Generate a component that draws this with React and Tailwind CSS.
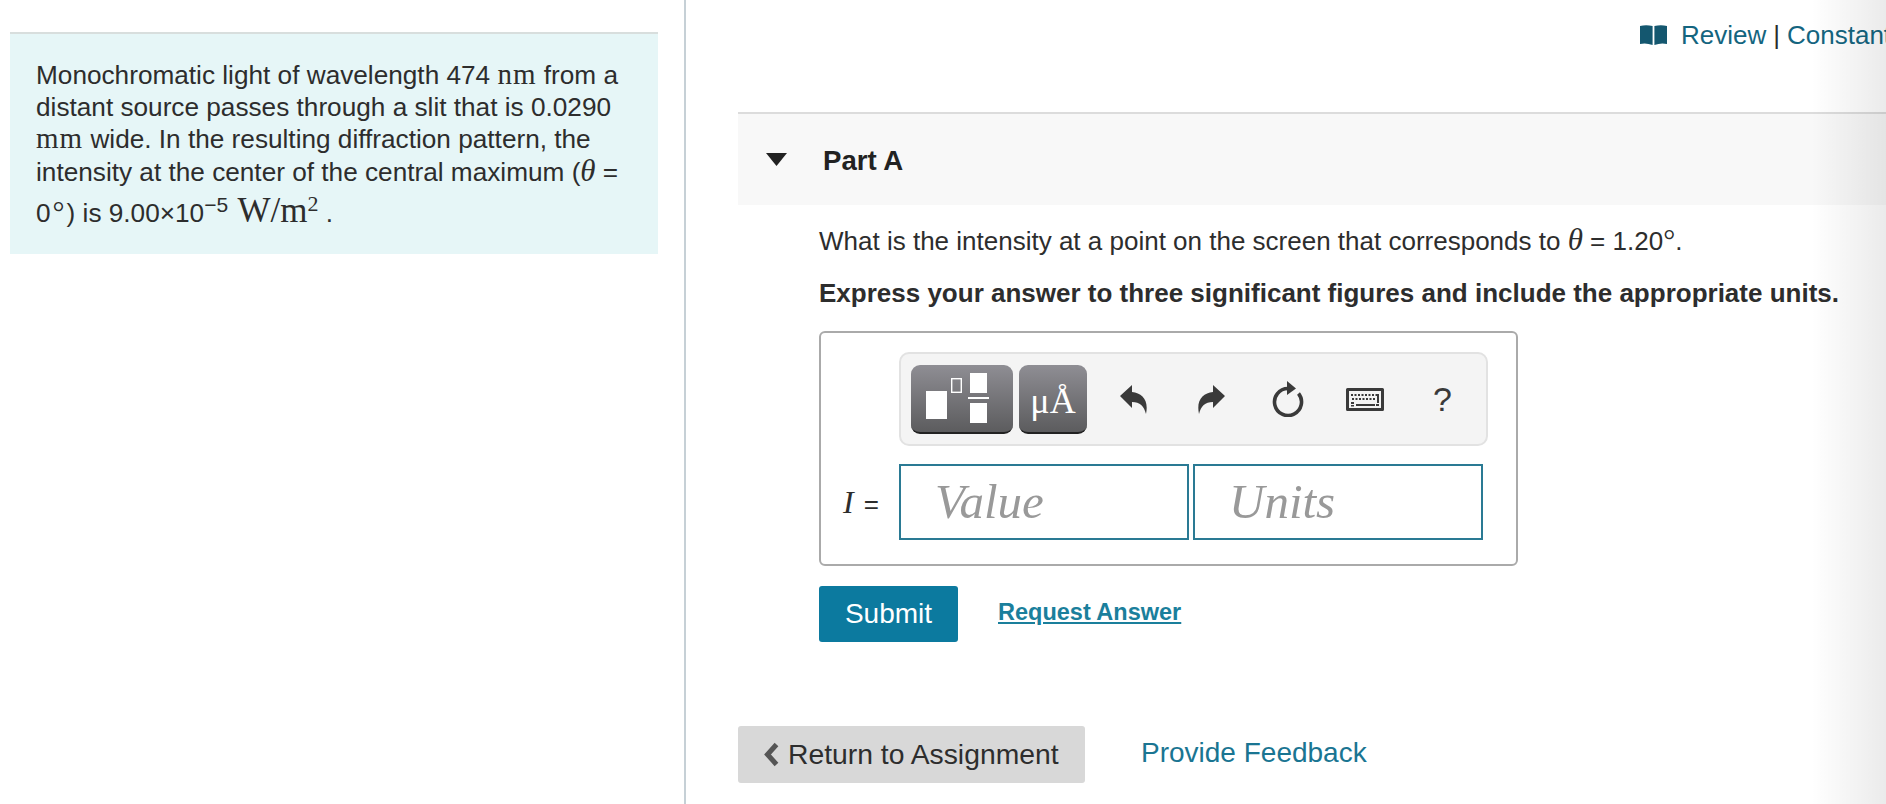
const sans = "font-['Liberation_Sans',Arial,sans-serif]";
const serif = "font-['Liberation_Serif','Times_New_Roman',serif]";

function BookIcon() {
    return (
        <svg width="27" height="20" viewBox="0 0 27 20" fill="#14576f" className="shrink-0">
            <path d="M0 1 Q6 -0.5 12.6 1 V20 Q6 17.5 0 19 Z" />
            <path d="M14.4 1 Q21 -0.5 27 1 V19 Q21 17.5 14.4 20 Z" />
        </svg>
    );
}

function TemplatesIcon() {
    return (
        <svg width="64" height="52" viewBox="0 0 64 52" fill="#fff">
            <rect x="0" y="19" width="21" height="28" />
            <rect x="25.7" y="6.7" width="9.6" height="13.6" fill="none" stroke="#fff" strokeWidth="1.4" />
            <rect x="44" y="1" width="17" height="20" />
            <rect x="42" y="25" width="21" height="2" />
            <rect x="44" y="31" width="17" height="20" />
        </svg>
    );
}

function UndoIcon({ flip }) {
    return (
        <svg width="28" height="31" viewBox="0 0 28 31" fill="#3a3a3a" className={flip ? "-scale-x-100" : ""}>
            <path d="M0 12 L12 1 V8 C22 9 29 16 26 30 C24 22 20 18 12 18 V24 Z" />
        </svg>
    );
}

function ResetIcon() {
    return (
        <svg width="32" height="36" viewBox="0 0 32 36" fill="none">
            <path d="M16 7.5 A13.5 13.5 0 1 0 26.5 12.5" stroke="#3a3a3a" strokeWidth="3.6" />
            <path d="M15 0 L24 7.5 L15 14 Z" fill="#3a3a3a" />
        </svg>
    );
}

function KeyboardIcon() {
    const keys = [];
    for (let i = 0; i < 8; i++) keys.push(<rect key={"a" + i} x={5 + i * 3.5} y="6" width="2" height="2" />);
    for (let i = 0; i < 7; i++) keys.push(<rect key={"b" + i} x={6 + i * 3.5} y="10" width="2" height="2" />);
    return (
        <svg width="38" height="23" viewBox="0 0 38 23" fill="#3a3a3a">
            <path fillRule="evenodd" d="M1.5 0 H36.5 Q38 0 38 1.5 V21.5 Q38 23 36.5 23 H1.5 Q0 23 0 21.5 V1.5 Q0 0 1.5 0 Z M3 3 V20 H35 V3 Z" />
            {keys}
            <rect x="31" y="6" width="2" height="9" />
            <rect x="5" y="14" width="3" height="2" />
            <rect x="10" y="16" width="19" height="2" />
            <rect x="5" y="17" width="3" height="1.5" />
            <rect x="30" y="16" width="3" height="2" />
        </svg>
    );
}

export default function App() {
    return (
        <div className={`flex h-[804px] w-full overflow-hidden bg-white text-[#2d2d2d] ${sans}`}>
            {/* left panel with the problem statement */}
            <div className="w-[686px] shrink-0 border-r-2 border-[#c6d0d6] pt-[32px] pl-[10px]">
                <div className="h-[222px] w-[648px] border-t-2 border-[#d8dedd] bg-[#e6f6f7] pt-[25px] pl-[26px] text-[26.2px] leading-[32px] whitespace-nowrap">
                    <p>Monochromatic light of wavelength 474 <span className={`${serif} text-[29px] leading-none tracking-[1px]`}>nm</span> from a</p>
                    <p>distant source passes through a slit that is 0.0290</p>
                    <p><span className={`${serif} text-[29px] leading-none tracking-[1px]`}>mm</span> wide. In the resulting diffraction pattern, the</p>
                    <p>intensity at the center of the central maximum (<span className={`${serif} text-[31px] leading-none italic`}>θ</span> =</p>
                    <p className="mt-[5px]">
                        0<span className={`${serif} ml-[2px] mr-[2px] text-[30px] leading-none`}>°</span>) is 9.00×10<sup className="text-[21px]">−5</sup>{" "}
                        <span className={`${serif} ml-[2px] text-[35px] leading-none`}>W/m<sup className="text-[22px]">2</sup></span> .
                    </p>
                </div>
            </div>

            {/* right panel */}
            <div className="relative min-w-0 flex-1 overflow-hidden pl-[52px]">
                <div className="flex h-[112px] items-center pb-[42px] pl-[902px] text-[26px] whitespace-nowrap text-[#14657f]">
                    <BookIcon />
                    <span className="ml-[14px]">Review</span>
                    <span className="mx-[7px] text-[#2d2d2d]">|</span>
                    <span>Constants</span>
                </div>

                <div className="flex h-[93px] items-center border-t-2 border-[#dcdcdc] bg-[#f8f8f8]">
                    <svg width="21" height="13" viewBox="0 0 21 13" fill="#222" className="ml-[28px]">
                        <path d="M0 0 H21 L10.5 13 Z" />
                    </svg>
                    <h2 className="mt-[2px] ml-[36px] text-[27.6px] font-bold text-[#222]">Part A</h2>
                </div>

                <div className="pl-[81px]">
                    <p className="mt-[19px] text-[26px] leading-[34px] whitespace-nowrap">
                        What is the intensity at a point on the screen that corresponds to <span className={`${serif} text-[31px] leading-none italic`}>θ</span> = 1.20<span className={`${serif} text-[30px] leading-none`}>°</span>.
                    </p>
                    <p className="mt-[20px] text-[26px] leading-[30px] font-bold whitespace-nowrap">
                        Express your answer to three significant figures and include the appropriate units.
                    </p>

                    {/* answer box */}
                    <div className="mt-[23px] flex h-[235px] w-[699px] flex-col rounded-[6px] border-2 border-[#aaaaaa] pt-[19px] pl-[78px]">
                        <div className="flex h-[94px] w-[589px] items-center rounded-[10px] border-2 border-[#e2e2e2] bg-[#f4f4f4] pl-[10px]">
                            <button className="flex h-[69px] w-[102px] shrink-0 items-center rounded-[9px] border-b-2 border-[#222] bg-gradient-to-b from-[#8f8e94] to-[#5c5c5e] pl-[15px]">
                                <TemplatesIcon />
                            </button>
                            <button className={`ml-[6px] flex h-[69px] w-[68px] shrink-0 items-center justify-center rounded-[9px] border-b-2 border-[#222] bg-gradient-to-b from-[#8f8e94] to-[#5c5c5e] pt-[5px] ${serif} text-[36px] text-white`}>
                                μÅ
                            </button>
                            <span className="ml-[33px] flex shrink-0"><UndoIcon /></span>
                            <span className="ml-[49px] flex shrink-0"><UndoIcon flip /></span>
                            <span className="ml-[47px] flex shrink-0"><ResetIcon /></span>
                            <span className="ml-[42px] flex shrink-0"><KeyboardIcon /></span>
                            <span className="ml-[49px] text-[34px] text-[#3a3a3a]">?</span>
                        </div>

                        <div className="relative mt-[18px] flex gap-[4px]">
                            <span className={`absolute top-[14px] left-[-56px] text-[32px] italic ${serif}`}>
                                I<span className={`${sans} ml-[10px] text-[26px] not-italic`}>=</span>
                            </span>
                            <div className={`flex h-[76px] w-[290px] items-center border-2 border-[#2a7a94] pl-[34px] ${serif} text-[49px] text-[#999] italic`}>
                                Value
                            </div>
                            <div className={`flex h-[76px] w-[290px] items-center border-2 border-[#2a7a94] pl-[34px] ${serif} text-[49px] text-[#999] italic`}>
                                Units
                            </div>
                        </div>
                    </div>

                    <div className="mt-[20px] flex items-center">
                        <button className="h-[56px] w-[139px] rounded-[3px] bg-[#0c7a9f] text-[28px] text-white">Submit</button>
                        <a className="mb-[2px] ml-[40px] text-[23.5px] font-bold text-[#1a7f9c] underline">Request Answer</a>
                    </div>
                </div>

                <div className="mt-[84px] flex items-center">
                    <button className="flex h-[57px] w-[347px] items-center rounded-[3px] bg-[#d8d8d8] pl-[26px] text-[28.3px] text-[#2d2d2d]">
                        <svg width="15" height="25" viewBox="0 0 15 25" fill="none" stroke="#555" strokeWidth="5" className="mr-[9px]">
                            <path d="M12.5 2.5 L3.5 12.5 L12.5 22.5" />
                        </svg>
                        Return to Assignment
                    </button>
                    <a className="mb-[3px] ml-[56px] text-[28px] text-[#1a7592]">Provide Feedback</a>
                </div>

                {/* fade on the right edge */}
                <div className="absolute top-0 right-0 h-full w-[75px] bg-gradient-to-r from-transparent to-black/[0.08]"></div>
            </div>
        </div>
    );
}
